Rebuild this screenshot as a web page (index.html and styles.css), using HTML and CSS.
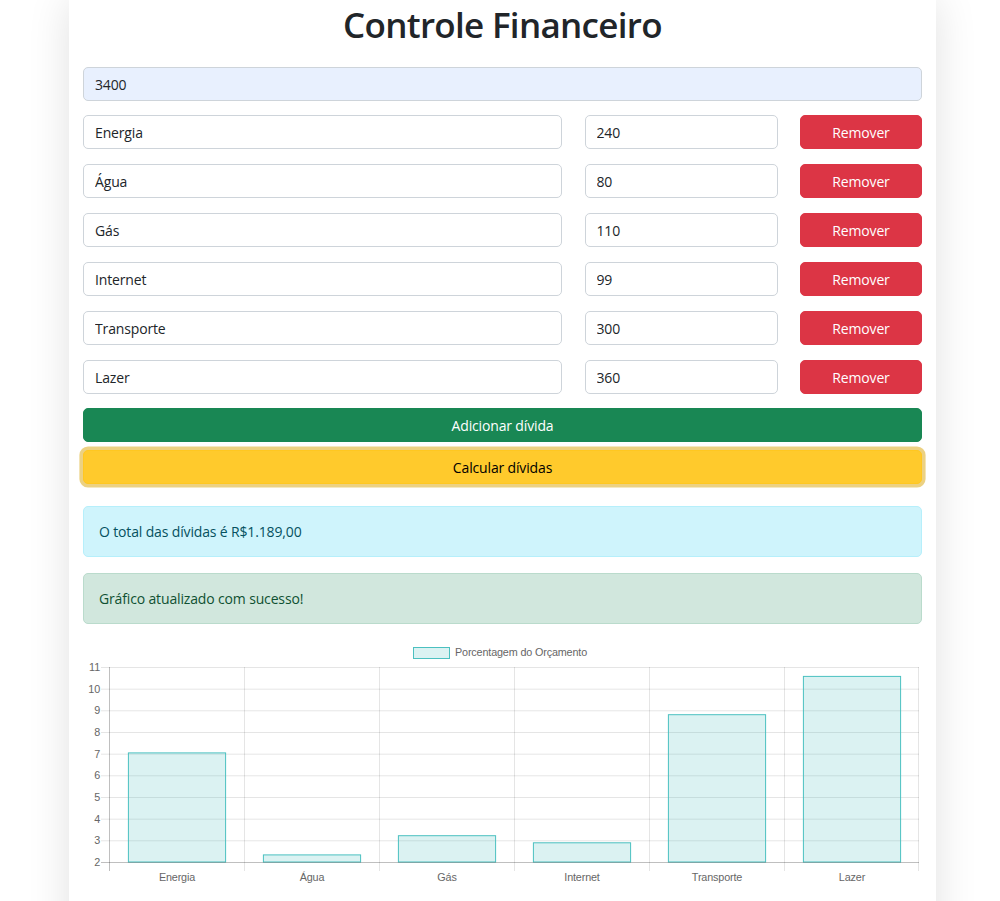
FILE: index.html
```html
<!DOCTYPE html>
<html lang="pt-BR">
<head>
<meta charset="utf-8">
<title>Controle Financeiro</title>
<link rel="stylesheet" href="styles.css">
</head>
<body>
<div class="page">
  <main class="card">
    <h1 class="title">Controle Financeiro</h1>
    <input class="field autofill" type="text" value="3400">
    <div class="debt-list">
      <div class="debt-row"><input class="field" type="text" value="Energia"><input class="field" type="text" value="240"><button class="btn btn-danger">Remover</button></div>
      <div class="debt-row"><input class="field" type="text" value="Água"><input class="field" type="text" value="80"><button class="btn btn-danger">Remover</button></div>
      <div class="debt-row"><input class="field" type="text" value="Gás"><input class="field" type="text" value="110"><button class="btn btn-danger">Remover</button></div>
      <div class="debt-row"><input class="field" type="text" value="Internet"><input class="field" type="text" value="99"><button class="btn btn-danger">Remover</button></div>
      <div class="debt-row"><input class="field" type="text" value="Transporte"><input class="field" type="text" value="300"><button class="btn btn-danger">Remover</button></div>
      <div class="debt-row"><input class="field" type="text" value="Lazer"><input class="field" type="text" value="360"><button class="btn btn-danger">Remover</button></div>
    </div>
    <button class="btn btn-success btn-block">Adicionar dívida</button>
    <button class="btn btn-warning btn-block btn-focus">Calcular dívidas</button>
    <div class="alert alert-info">O total das dívidas é R$1.189,00</div>
    <div class="alert alert-success">Gráfico atualizado com sucesso!</div>
    <div class="chart">
      <svg width="839" height="250" viewBox="0 0 839 250" xmlns="http://www.w3.org/2000/svg">
        <g font-family="Liberation Sans, Arial, sans-serif" font-size="10.8" fill="#666">
          <rect x="330.5" y="7.5" width="36" height="11" fill="rgba(75,192,192,0.2)" stroke="rgb(75,192,192)" stroke-width="1"/>
          <text x="372" y="16">Porcentagem do Orçamento</text>
        </g>
        <g stroke="rgba(0,0,0,0.1)" stroke-width="1">
          <line x1="18" y1="27.5" x2="836" y2="27.5"/>
          <line x1="18" y1="49.2" x2="836" y2="49.2"/>
          <line x1="18" y1="70.8" x2="836" y2="70.8"/>
          <line x1="18" y1="92.5" x2="836" y2="92.5"/>
          <line x1="18" y1="114.2" x2="836" y2="114.2"/>
          <line x1="18" y1="135.8" x2="836" y2="135.8"/>
          <line x1="18" y1="157.5" x2="836" y2="157.5"/>
          <line x1="18" y1="179.2" x2="836" y2="179.2"/>
          <line x1="18" y1="200.8" x2="836" y2="200.8"/>
          <line x1="161.5" y1="27" x2="161.5" y2="231"/>
          <line x1="296.5" y1="27" x2="296.5" y2="231"/>
          <line x1="431.5" y1="27" x2="431.5" y2="231"/>
          <line x1="566.5" y1="27" x2="566.5" y2="231"/>
          <line x1="701.5" y1="27" x2="701.5" y2="231"/>
          <line x1="835.5" y1="27" x2="835.5" y2="231"/>
        </g>
        <g fill="rgba(75,192,192,0.2)" stroke="rgb(75,192,192)" stroke-width="1">
          <rect x="45.4" y="112.9" width="97.2" height="109.1"/>
          <rect x="180.4" y="214.9" width="97.2" height="7.1"/>
          <rect x="315.4" y="195.7" width="97.2" height="26.3"/>
          <rect x="450.4" y="202.8" width="97.2" height="19.2"/>
          <rect x="585.4" y="74.7" width="97.2" height="147.3"/>
          <rect x="720.4" y="36.4" width="97.2" height="185.6"/>
        </g>
        <g stroke="rgba(0,0,0,0.25)" stroke-width="1">
          <line x1="26.5" y1="27" x2="26.5" y2="231"/>
          <line x1="18" y1="222.5" x2="836" y2="222.5"/>
        </g>
        <g font-family="Liberation Sans, Arial, sans-serif" font-size="10.8" fill="#666" text-anchor="end">
          <text x="17" y="31">11</text>
          <text x="17" y="52.7">10</text>
          <text x="17" y="74.3">9</text>
          <text x="17" y="96">8</text>
          <text x="17" y="117.7">7</text>
          <text x="17" y="139.3">6</text>
          <text x="17" y="161">5</text>
          <text x="17" y="182.7">4</text>
          <text x="17" y="204.3">3</text>
          <text x="17" y="226">2</text>
        </g>
        <g font-family="Liberation Sans, Arial, sans-serif" font-size="10.8" fill="#666" text-anchor="middle">
          <text x="94" y="241">Energia</text>
          <text x="229" y="241">Água</text>
          <text x="364" y="241">Gás</text>
          <text x="499" y="241">Internet</text>
          <text x="634" y="241">Transporte</text>
          <text x="769" y="241">Lazer</text>
        </g>
      </svg>
    </div>
  </main>
</div>
</body>
</html>
```
FILE: styles.css
```css
* { box-sizing: border-box; }
html, body { margin: 0; padding: 0; background: #fff; }
body {
  font-family: "Open Sans", "Noto Sans", "DejaVu Sans", sans-serif;
  color: #212529;
  font-size: 14px;
  letter-spacing: -0.15px;
  line-height: 1.5;
}
.page {
  margin: 0 64px 0 69px;
}
.card {
  background: #fff;
  padding: 3px 14px 20px;
  box-shadow: 0 0 40px rgba(0, 0, 0, 0.12);
  min-height: 950px;
}
.title {
  margin: 0 0 20px;
  font-size: 35px;
  font-weight: 600;
  letter-spacing: -0.7px;
  line-height: 44px;
  text-align: center;
  color: #212529;
}
.field {
  display: block;
  width: 100%;
  height: 34px;
  padding: 0 11px;
  font: inherit;
  letter-spacing: inherit;
  color: #212529;
  background: #fff;
  border: 1px solid #ced4da;
  border-radius: 5px;
  outline: none;
}
.autofill {
  background: #e8f0fe;
  margin-bottom: 14px;
}
.debt-list {
  display: flex;
  flex-direction: column;
  gap: 15px;
  margin-bottom: 14px;
}
.debt-row {
  display: grid;
  grid-template-columns: 479px 193px 1fr;
  column-gap: 22.5px;
}
.btn {
  display: block;
  height: 34px;
  padding: 0 10px;
  font: inherit;
  letter-spacing: inherit;
  text-align: center;
  border: 1px solid transparent;
  border-radius: 5px;
  cursor: pointer;
}
.btn-danger { background: #dc3545; border-color: #dc3545; color: #fff; }
.btn-success { background: #198754; border-color: #198754; color: #fff; }
.btn-warning { background: #ffca2c; border-color: #ffc720; color: #000; }
.btn-block { width: 100%; }
.btn-success { margin-bottom: 8px; }
.btn-focus { box-shadow: 0 0 0 3.6px rgba(217, 164, 6, 0.5); }
.alert {
  padding: 14px 15px;
  border: 1px solid transparent;
  border-radius: 5px;
  line-height: 21px;
}
.alert-info {
  margin-top: 22px;
  margin-bottom: 16px;
  background: #cff4fc;
  border-color: #b6effb;
  color: #055160;
}
.alert-success {
  margin-bottom: 16px;
  background: #d1e7dd;
  border-color: #badbcc;
  color: #0f5132;
}
.chart svg { display: block; }
```
